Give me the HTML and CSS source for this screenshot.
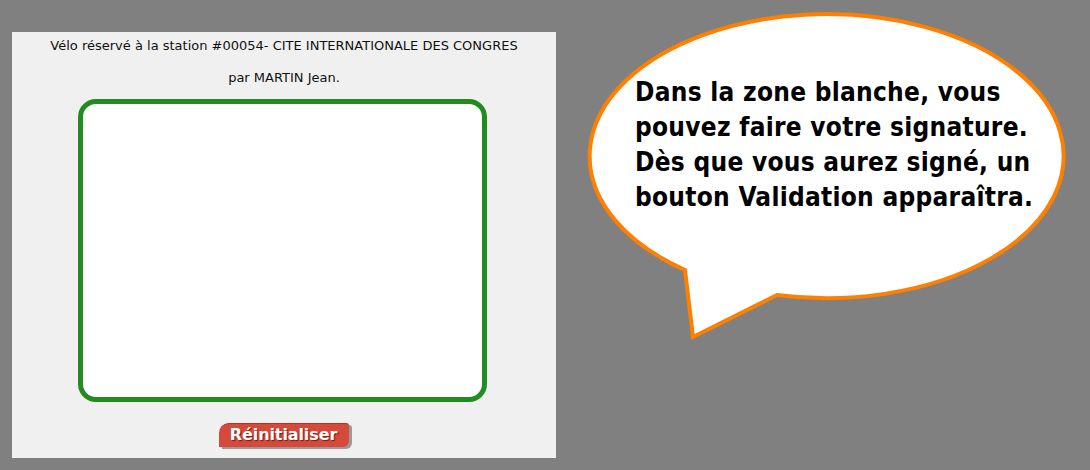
FILE: index.html
```html
<!DOCTYPE html>
<html lang="fr">
<head>
<meta charset="utf-8">
<title>Signature</title>
<link rel="stylesheet" href="styles.css">
</head>
<body>
<div class="page">
  <section class="panel">
    <p class="info">Vélo réservé à la station #00054- CITE INTERNATIONALE DES CONGRES</p>
    <p class="info second">par MARTIN Jean.</p>
    <div class="sign-zone"></div>
    <button class="reset" type="button">Réinitialiser</button>
  </section>

  <div class="bubble">
    <svg class="bubble-shape" width="490" height="340" viewBox="583 8 490 340" aria-hidden="true">
      <path d="M685 270 L693 337 L777 295 A237 142 0 1 0 685 270 Z" fill="#ffffff" stroke="#ff7f00" stroke-width="4" stroke-linejoin="miter"/>
    </svg>
    <p class="bubble-text">Dans la zone blanche, vous<br>pouvez faire votre signature.<br>Dès que vous aurez signé, un<br>bouton Validation apparaîtra.</p>
  </div>
</div>
</body>
</html>
```

FILE: styles.css
```css
html, body {
  margin: 0;
  padding: 0;
}

body {
  background: #808080;
  width: 1090px;
  height: 470px;
  overflow: hidden;
  font-family: "DejaVu Sans", sans-serif;
}

.page {
  position: relative;
  width: 1090px;
  height: 470px;
  box-sizing: border-box;
  padding: 32px 0 0 12px;
}

.panel {
  width: 544px;
  height: 426px;
  box-sizing: border-box;
  padding-top: 6px;
  background: #f0f0f0;
  display: flex;
  flex-direction: column;
  align-items: center;
}

.info {
  margin: 0;
  font-size: 13px;
  line-height: 16px;
  color: #111111;
  text-align: center;
}

.info.second {
  margin-top: 16px;
}

.sign-zone {
  margin-top: 13px;
  margin-right: 3px;
  width: 409px;
  height: 303px;
  box-sizing: border-box;
  border: 5px solid #228b22;
  border-radius: 18px;
  background: #ffffff;
}

.reset {
  margin-top: 21px;
  margin-right: 1px;
  width: 130px;
  height: 24px;
  padding: 0 0 1px 0;
  border: none;
  border-top: 1px solid #c0301f;
  border-radius: 10px 3px 6px 0;
  background: #d64a3b;
  box-shadow: 3px 2px 0 #9a9a9a;
  color: #ffffff;
  font-family: "DejaVu Sans", sans-serif;
  font-weight: bold;
  font-size: 16px;
  letter-spacing: -0.1px;
  line-height: 20px;
  text-shadow: 1px 1px 1px rgba(90, 0, 0, 0.7);
}

.bubble {
  position: absolute;
  left: 583px;
  top: 8px;
  width: 490px;
  height: 340px;
}

.bubble-shape {
  position: absolute;
  left: 0;
  top: 0;
  display: block;
}

.bubble-text {
  position: absolute;
  left: 52px;
  top: 67px;
  margin: 0;
  font-family: "DejaVu Sans Condensed", "DejaVu Sans", sans-serif;
  font-stretch: condensed;
  font-size: 26px;
  letter-spacing: 0.27px;
  line-height: 35px;
  font-weight: bold;
  color: #000000;
  white-space: nowrap;
}
```
